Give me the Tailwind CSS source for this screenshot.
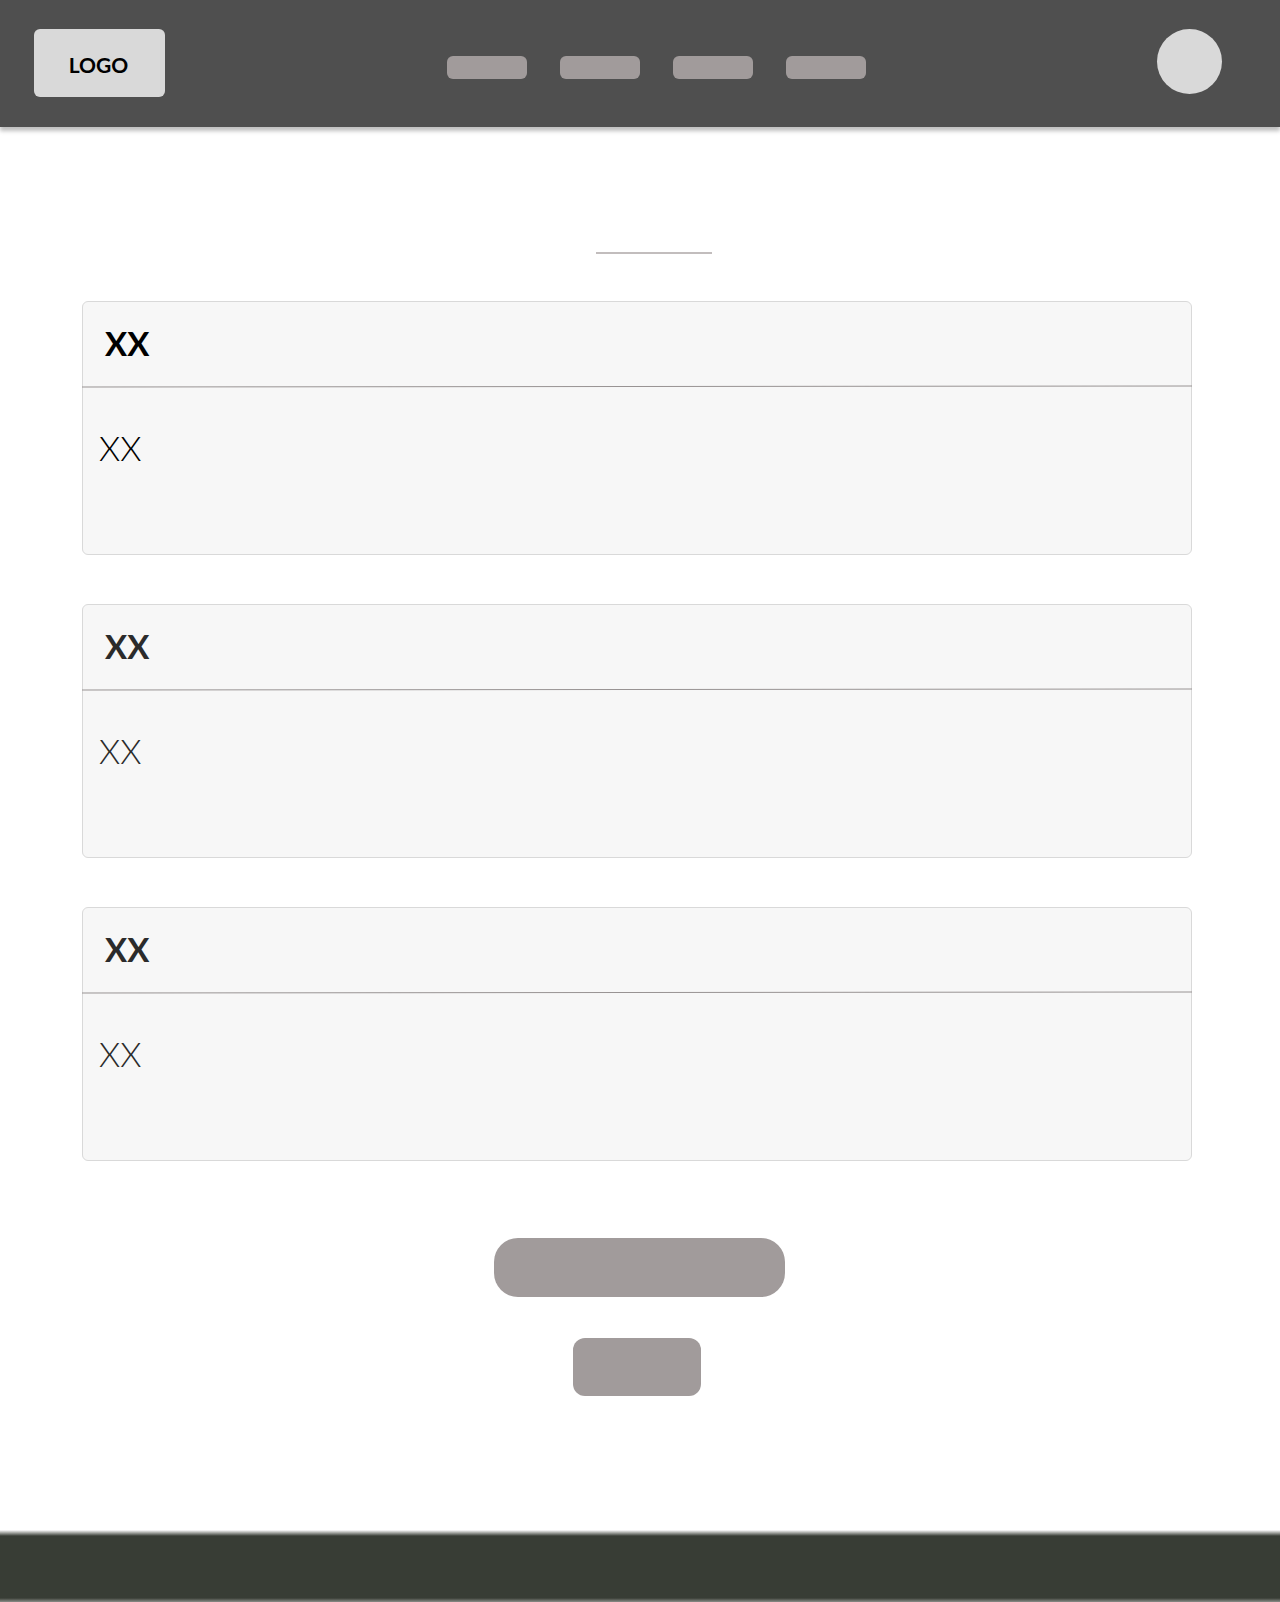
<!DOCTYPE html>
<html lang="en">
<head>
<meta charset="utf-8">
<meta name="viewport" content="width=device-width, initial-scale=1">
<title>Wireframe</title>
<script src="https://cdn.jsdelivr.net/npm/@tailwindcss/browser@4"></script>
</head>
<body class="flex min-h-screen flex-col bg-white font-['Lato',sans-serif] text-black">
  <header class="flex h-[127px] items-start justify-between bg-[#4f4f4f] pt-[29px] pr-[58px] pl-[34px] shadow-[0_4px_4px_rgba(0,0,0,0.25)]">
    <a href="#" class="flex h-[68px] w-[131px] items-center justify-center rounded-md bg-[#d9d9d9] pt-1 pr-0.5 text-[21px] leading-6 font-bold">LOGO</a>
    <nav aria-label="Main" class="mt-[27px] mr-[9px] flex gap-[33px]">
      <a href="#" aria-label="Link 1" class="h-[23px] w-20 rounded-md bg-[#a19b9b]"></a>
      <a href="#" aria-label="Link 2" class="h-[23px] w-20 rounded-md bg-[#a19b9b]"></a>
      <a href="#" aria-label="Link 3" class="h-[23px] w-20 rounded-md bg-[#a19b9b]"></a>
      <a href="#" aria-label="Link 4" class="h-[23px] w-20 rounded-md bg-[#a19b9b]"></a>
    </nav>
    <button type="button" aria-label="Profile" class="size-[65px] rounded-full bg-[#d9d9d9]"></button>
  </header>

  <main class="flex flex-1 flex-col items-center pt-[125px] pr-[88px] pb-[134px] pl-[82px]">
    <div class="mb-[47px] w-full pl-[34px]">
      <hr class="mx-auto w-29 border-t-2 border-[#c2bdbd]">
    </div>

    <div class="flex w-full flex-col gap-[49px]">
      <section class="h-[254px] rounded-md border border-[#d9d9d9] bg-[#f7f7f7]">
        <h2 class="pt-[21px] pb-[22px] pl-[22px] text-[33px] leading-10 font-bold">XX</h2>
        <svg class="-mx-px block h-[3px] w-[calc(100%+2px)]" viewBox="0 0 1110 3" preserveAspectRatio="none" aria-hidden="true"><path d="M0 2L1110 1" stroke="#989393" stroke-width="1"/></svg>
        <p class="pt-10 pl-4 text-[34px] leading-10 font-light">XX</p>
      </section>
      <section class="h-[254px] rounded-md border border-[#d9d9d9] bg-[#f7f7f7] text-[#2b2b2b]">
        <h2 class="pt-[21px] pb-[22px] pl-[22px] text-[33px] leading-10 font-bold">XX</h2>
        <svg class="-mx-px block h-[3px] w-[calc(100%+2px)]" viewBox="0 0 1110 3" preserveAspectRatio="none" aria-hidden="true"><path d="M0 2L1110 1" stroke="#989393" stroke-width="1"/></svg>
        <p class="pt-10 pl-4 text-[34px] leading-10 font-light">XX</p>
      </section>
      <section class="h-[254px] rounded-md border border-[#d9d9d9] bg-[#f7f7f7] text-[#2b2b2b]">
        <h2 class="pt-[21px] pb-[22px] pl-[22px] text-[33px] leading-10 font-bold">XX</h2>
        <svg class="-mx-px block h-[3px] w-[calc(100%+2px)]" viewBox="0 0 1110 3" preserveAspectRatio="none" aria-hidden="true"><path d="M0 2L1110 1" stroke="#989393" stroke-width="1"/></svg>
        <p class="pt-10 pl-4 text-[34px] leading-10 font-light">XX</p>
      </section>
    </div>

    <div class="mt-[77px] w-full pl-[5px]">
      <button type="button" aria-label="Primary action" class="mx-auto block h-[59px] w-[291px] rounded-3xl bg-[#a19b9b]"></button>
    </div>
    <button type="button" aria-label="Secondary action" class="mt-[41px] h-[58px] w-32 rounded-xl bg-[#a19b9b]"></button>
  </main>

  <footer class="h-[72px] bg-[linear-gradient(to_bottom,transparent,#383d35_6px,#383d35_calc(100%-4px),#8a8d88)]"></footer>
</body>
</html>
